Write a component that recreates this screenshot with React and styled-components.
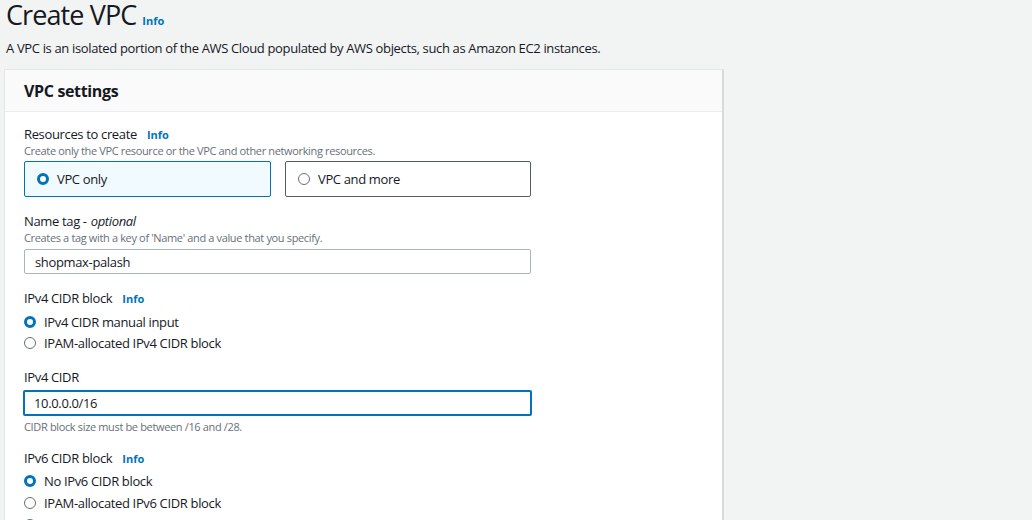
import React from 'react';
import styled, { createGlobalStyle } from 'styled-components';

const GlobalStyle = createGlobalStyle`
  body {
    margin: 0;
    background: #f2f3f3;
    font-family: "Open Sans", "Noto Sans", sans-serif;
    letter-spacing: -0.35px;
    color: #16191f;
  }
`;

const Page = styled.div`
  padding: 0 308px 0 4px;
  height: 520px;
  overflow: hidden;
`;

const TitleRow = styled.div`
  display: flex;
  align-items: baseline;
  gap: 6px;
  padding-left: 2px;
`;

const Title = styled.h1`
  margin: 0;
  font-size: 27px;
  font-weight: 400;
  line-height: 29px;
  letter-spacing: -0.9px;
`;

const Info = styled.a`
  color: #0073bb;
  font-size: 11px;
  font-weight: 700;
  letter-spacing: 0;
  text-decoration: none;
  margin-left: ${p => p.$gap || 0}px;
`;

const Lead = styled.p`
  margin: 10px 0 0 2px;
  font-size: 13px;
  line-height: 18px;
`;

const Panel = styled.section`
  margin-top: 12px;
  background: #fff;
  border: 1px solid #e4e7e7;
  border-right: 2px solid #d5dbdb;
  border-bottom: none;
`;

const PanelHeader = styled.div`
  height: 41px;
  display: flex;
  align-items: center;
  padding-left: 19px;
  background: #fafafa;
  border-bottom: 1px solid #eaeded;
  font-size: 16px;
  font-weight: 700;
`;

const PanelBody = styled.div`
  padding: 14px 19px 0;
  width: 507px;
`;

const Field = styled.div`
  margin-bottom: ${p => p.$mb ?? 16}px;
`;

const Label = styled.div`
  font-size: 13px;
  line-height: 17px;
  display: flex;
  align-items: baseline;

  em {
    margin-left: 4px;
  }
`;

const Hint = styled.div`
  font-size: 11px;
  line-height: 15px;
  color: #687078;
  margin-top: ${p => p.$mt ?? 0}px;
`;

const Tiles = styled.div`
  display: grid;
  grid-template-columns: 247px 246px;
  gap: 14px;
  margin-top: 3px;
`;

const Tile = styled.label`
  display: flex;
  align-items: center;
  gap: 8px;
  height: 36px;
  box-sizing: border-box;
  padding-left: 12px;
  border: 1px solid ${p => (p.$on ? '#0073bb' : '#545b64')};
  background: ${p => (p.$on ? '#f1faff' : '#fff')};
  border-radius: 2px;
  font-size: 13px;
`;

const Dot = styled.span`
  width: 12px;
  height: 12px;
  box-sizing: border-box;
  border-radius: 50%;
  flex: none;
  border: ${p => (p.$on ? '3.5px solid #0073bb' : '1px solid #687078')};
  background: #fff;
`;

const Input = styled.div`
  margin-top: ${p => p.$mt ?? 4}px;
  box-sizing: border-box;
  display: flex;
  align-items: center;
  padding-left: ${p => (p.$focus ? 9 : 10)}px;
  border: ${p => (p.$focus ? '2px solid #0073bb' : '1px solid #aab7b8')};
  margin-left: ${p => (p.$focus ? -1 : 0)}px;
  margin-right: ${p => (p.$focus ? -1 : 0)}px;
  height: ${p => (p.$focus ? 26 : 25)}px;
  border-radius: 2px;
  font-size: 13px;
  background: #fff;
`;

const RadioList = styled.div`
  display: flex;
  flex-direction: column;
  gap: ${p => p.$gap ?? 3}px;
  margin-top: ${p => p.$mt ?? 6}px;
`;

const Radio = styled.label`
  display: flex;
  align-items: center;
  gap: 8px;
  font-size: 13px;
  line-height: 18px;
`;

function Option({ on, children }) {
  return (
    <Radio>
      <Dot $on={on} />
      {children}
    </Radio>
  );
}

export default function App() {
  return (
    <Page>
      <GlobalStyle />
      <TitleRow>
        <Title>Create VPC</Title>
        <Info>Info</Info>
      </TitleRow>
      <Lead>
        A VPC is an isolated portion of the AWS Cloud populated by AWS objects, such as Amazon EC2 instances.
      </Lead>
      <Panel>
        <PanelHeader>VPC settings</PanelHeader>
        <PanelBody>
          <Field $mb={16}>
            <Label>
              Resources to create<Info $gap={10}>Info</Info>
            </Label>
            <Hint>Create only the VPC resource or the VPC and other networking resources.</Hint>
            <Tiles>
              <Tile $on>
                <Dot $on />
                VPC only
              </Tile>
              <Tile>
                <Dot />
                VPC and more
              </Tile>
            </Tiles>
          </Field>
          <Field $mb={16}>
            <Label>
              Name tag - <em>optional</em>
            </Label>
            <Hint>Creates a tag with a key of 'Name' and a value that you specify.</Hint>
            <Input>shopmax-palash</Input>
          </Field>
          <Field $mb={17}>
            <Label>
              IPv4 CIDR block<Info $gap={10}>Info</Info>
            </Label>
            <RadioList>
              <Option on>IPv4 CIDR manual input</Option>
              <Option>IPAM-allocated IPv4 CIDR block</Option>
            </RadioList>
          </Field>
          <Field $mb={16}>
            <Label>IPv4 CIDR</Label>
            <Input $focus $mt={4}>10.0.0.0/16</Input>
            <Hint $mt={3}>CIDR block size must be between /16 and /28.</Hint>
          </Field>
          <Field>
            <Label>
              IPv6 CIDR block<Info $gap={10}>Info</Info>
            </Label>
            <RadioList $mt={5} $gap={4}>
              <Option on>No IPv6 CIDR block</Option>
              <Option>IPAM-allocated IPv6 CIDR block</Option>
              <Option>Amazon-provided IPv6 CIDR block</Option>
            </RadioList>
          </Field>
        </PanelBody>
      </Panel>
    </Page>
  );
}
